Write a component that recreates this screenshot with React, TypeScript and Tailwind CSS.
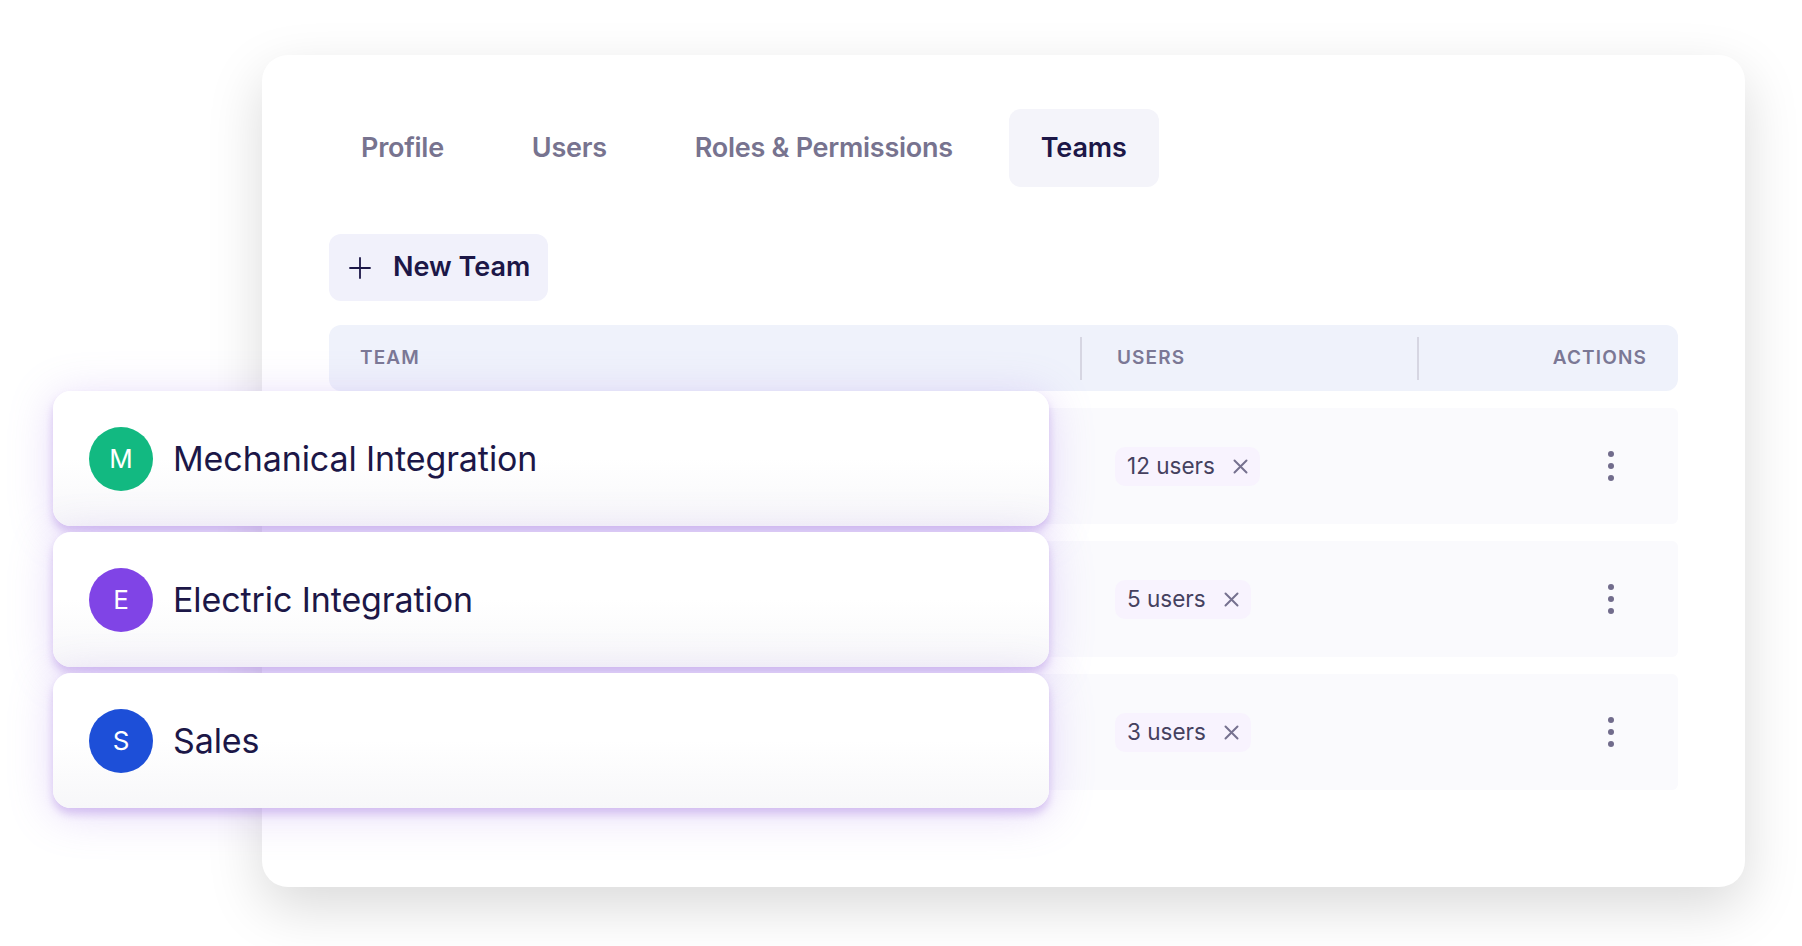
import React from 'react';

const tabs = ['Profile', 'Users', 'Roles & Permissions', 'Teams'];

const teams = [
  { letter: 'M', name: 'Mechanical Integration', color: 'bg-[#12b981]', users: '12 users' },
  { letter: 'E', name: 'Electric Integration', color: 'bg-[#8044e6]', users: '5 users' },
  { letter: 'S', name: 'Sales', color: 'bg-[#1d4fd8]', users: '3 users' },
];

const PlusIcon = () => (
  <svg width="22" height="22" viewBox="0 0 22 22" fill="none">
    <path d="M11 1v20M1 11h20" stroke="#1c1747" strokeWidth="1.8" strokeLinecap="round" />
  </svg>
);

const XIcon = () => (
  <svg width="15" height="15" viewBox="0 0 15 15" fill="none">
    <path d="M1.5 1.5l12 12M13.5 1.5l-12 12" stroke="#76718f" strokeWidth="2" strokeLinecap="round" />
  </svg>
);

const Dots = () => (
  <div className="flex flex-col items-center gap-[6px]">
    <span className="block h-[6px] w-[6px] rounded-full bg-[#716c8c]" />
    <span className="block h-[6px] w-[6px] rounded-full bg-[#716c8c]" />
    <span className="block h-[6px] w-[6px] rounded-full bg-[#716c8c]" />
  </div>
);

const App: React.FC = () => {
  return (
    <div
      className="relative h-[946px] w-[1802px] overflow-hidden bg-white pl-[262px] pt-[55px]"
      style={{ fontFamily: 'Inter, "Noto Sans", sans-serif' }}
    >
      {/* main settings card */}
      <div className="flex h-[832px] w-[1483px] flex-col rounded-[26px] bg-white pl-[67px] pt-[54px] shadow-[0_20px_55px_rgba(0,0,0,0.15)]">
        <div className="flex gap-6">
          {tabs.map((t) => (
            <div
              key={t}
              className={
                t === 'Teams'
                  ? 'flex h-[78px] items-center rounded-[12px] bg-[#f4f4fa] px-8 text-[27px] font-semibold tracking-[-0.005em] text-[#1c1747]'
                  : 'flex h-[78px] items-center px-8 text-[27px] font-semibold tracking-[-0.01em] text-[#77738f]'
              }
            >
              {t}
            </div>
          ))}
        </div>

        <div className="mt-[47px] flex">
          <button className="flex h-[67px] items-center gap-[22px] rounded-[12px] bg-[#f1f1fb] pl-[20px] pr-[18px] text-[27px] font-semibold text-[#1c1747]">
            <PlusIcon />
            New Team
          </button>
        </div>

        <div className="mt-[24px] grid h-[66px] w-[1349px] grid-cols-[751px_337px_261px] items-center rounded-[12px] bg-[#eff2fb] text-[19px] font-semibold uppercase tracking-[0.06em] text-[#7b7895]">
          <div className="pl-[31px]">Team</div>
          <div className="flex h-[43px] items-center border-l-2 border-[#d6d6e2] pl-[35px]">Users</div>
          <div className="flex h-[43px] items-center justify-end border-l-2 border-[#d6d6e2] pr-[31px]">Actions</div>
        </div>

        <div className="mt-[17px] flex w-[1349px] flex-col gap-[17px]">
          {teams.map((t) => (
            <div
              key={t.name}
              className="grid h-[116px] grid-cols-[751px_337px_261px] items-center rounded-[6px] bg-[#fafafd]"
            >
              <div />
              <div className="pl-[35px]">
                <span className="inline-flex h-[39px] items-center gap-[18px] rounded-[10px] bg-[#f8f3fe] pl-[12px] pr-[12px] text-[22.5px] text-[#45415f]">
                  {t.users}
                  <XIcon />
                </span>
              </div>
              <div className="flex justify-end pr-[64px]">
                <Dots />
              </div>
            </div>
          ))}
        </div>
      </div>

      {/* floating team cards laid over the table */}
      <div className="absolute left-[53px] top-[391px] flex w-[996px] flex-col gap-[6px]">
        {teams.map((t) => (
          <div
            key={t.name}
            className="flex h-[135px] items-center gap-[20px] rounded-[18px] bg-gradient-to-b from-white via-white to-[#f7f7f9] pl-[36px] shadow-[0_6px_8px_rgba(170,130,225,0.4),0_6px_44px_rgba(170,130,235,0.3)]"
          >
            <div
              className={`flex h-[64px] w-[64px] items-center justify-center rounded-full ${t.color} text-[26px] text-white`}
            >
              {t.letter}
            </div>
            <div className="text-[34px] tracking-[-0.003em] text-[#1c1747]">{t.name}</div>
          </div>
        ))}
      </div>
    </div>
  );
};

export default App;
